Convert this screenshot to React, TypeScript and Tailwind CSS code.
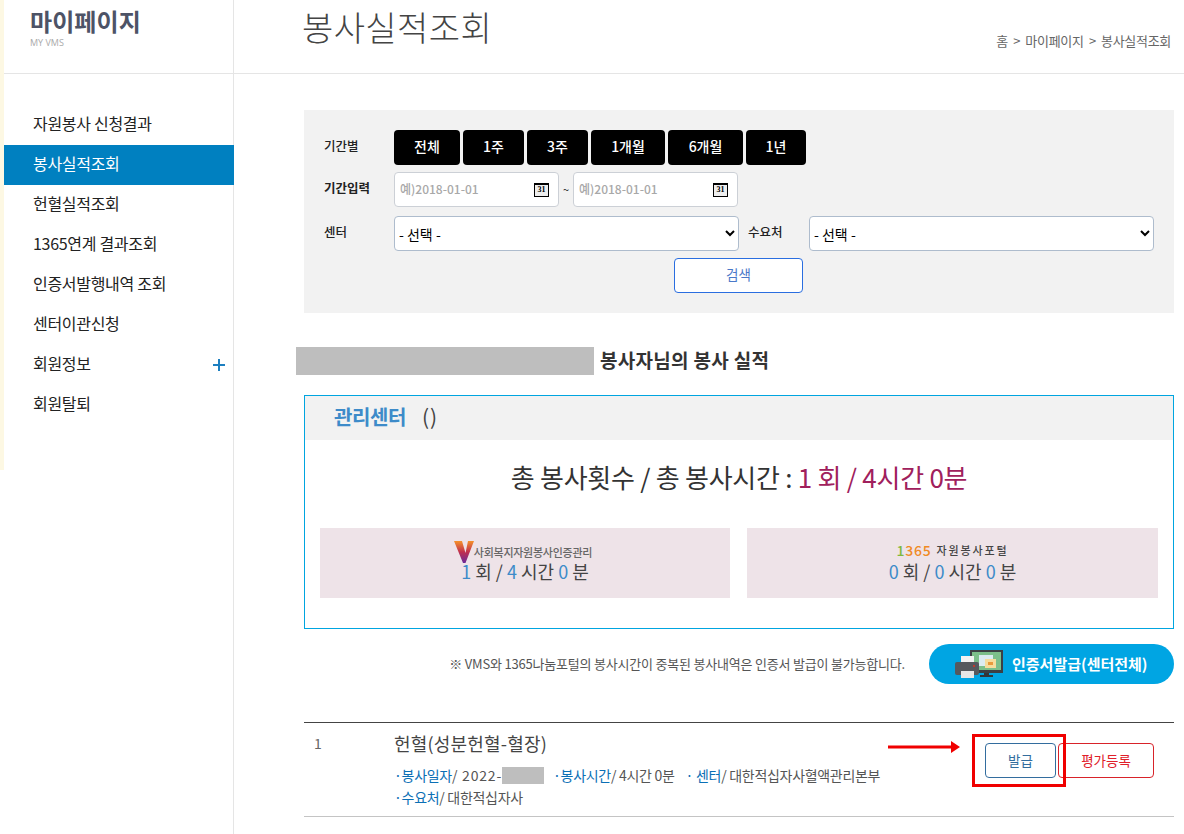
const FONT = { fontFamily: '"Noto Sans CJK KR", "Noto Sans", sans-serif' };

const menus = ["자원봉사 신청결과", "봉사실적조회", "헌혈실적조회", "1365연계 결과조회", "인증서발행내역 조회", "센터이관신청", "회원정보", "회원탈퇴"];
const periods = [
  { label: "전체", w: "w-[66px]" },
  { label: "1주", w: "w-[61px]" },
  { label: "3주", w: "w-[61px]" },
  { label: "1개월", w: "w-[74px]" },
  { label: "6개월", w: "w-[75px]" },
  { label: "1년", w: "w-[60px]" },
];

function DateInput() {
  return (
    <div className="w-[165px] h-[35px] bg-white border border-[#ccd0d6] rounded-[4px] flex items-center justify-between pl-[5px] pr-[9px]">
      <span className="text-[12px] font-medium text-[#a8a8a8] pb-[1px]">예)2018-01-01</span>
      <span className="w-[15px] h-[14px] border border-black border-t-[2px] bg-[#eee] flex items-center justify-center text-[8px] font-bold leading-none text-black" style={{ fontFamily: '"Liberation Serif", serif' }}>31</span>
    </div>
  );
}

function Printer() {
  return (
    <svg width="48" height="28" viewBox="0 0 48 28">
      <rect x="15" y="0" width="33" height="23" fill="#3c3f44" />
      <rect x="17" y="2" width="29" height="18" fill="#7cbf8a" />
      <rect x="24" y="5" width="14" height="11" fill="#dcecf2" />
      <rect x="30" y="9" width="11" height="9" fill="#f6dc9c" />
      <rect x="33" y="12" width="5" height="3" fill="#e89a3c" />
      <rect x="29" y="23" width="5" height="2" fill="#33363a" />
      <rect x="25" y="25" width="13" height="2" fill="#33363a" />
      <rect x="6" y="6" width="13" height="7" fill="#f2f2f2" />
      <rect x="0" y="12" width="24" height="13" rx="2" fill="#55585d" />
      <rect x="6" y="21" width="13" height="7" fill="#e6e6e6" />
      <rect x="18" y="15" width="2" height="2" fill="#c0392b" />
    </svg>
  );
}

export default function App() {
  return (
    <div className="w-[1184px] h-[834px] overflow-hidden bg-white flex text-[#333]" style={FONT}>
      <div className="w-[4px] h-[470px] bg-[#fdf8e3] shrink-0" />

      <aside className="w-[230px] h-full border-r border-[#e5e5e5] shrink-0">
        <div className="h-[74px] border-b border-[#e5e5e5] pl-[26px] pt-[5px]">
          <p className="text-[24px] font-bold leading-[32px] tracking-[0.1px] text-[#4d5366]">마이페이지</p>
          <p className="text-[9px] font-medium leading-[10px] pt-[1px] text-[#aaa]" style={{ fontFamily: '"Open Sans", sans-serif' }}>MY VMS</p>
        </div>
        <ul className="pt-[31px] w-[230px]">
          {menus.map((m) => (
            <li
              key={m}
              className={`h-[40px] pl-[29px] pr-[3px] pb-[4px] flex items-center justify-between text-[16px] tracking-[-0.3px] ${m === "봉사실적조회" ? "bg-[#0080c0] text-white" : "text-[#222]"}`}
            >
              {m}
              {m === "회원정보" && (
                <svg width="12" height="12" viewBox="0 0 12 12" className="mr-[6px] mt-[4px]">
                  <path d="M5 0h2v5h5v2H7v5H5V7H0V5h5z" fill="#1d7fc0" />
                </svg>
              )}
            </li>
          ))}
        </ul>
      </aside>

      <main className="flex-1 min-w-0">
        <header className="h-[74px] border-b border-[#e5e5e5] flex justify-between pl-[68px] pr-[13px]">
          <h1 className="text-[34px] font-light leading-[54px] tracking-[0.4px] text-[#444]">봉사실적조회</h1>
          <p className="text-[13px] tracking-[-0.3px] text-[#666] pt-[31px]">홈 &nbsp;&gt;&nbsp; 마이페이지 &nbsp;&gt;&nbsp; 봉사실적조회</p>
        </header>

        <div className="pl-[70px] pr-[10px] pt-[36px]">
          <section className="h-[203px] bg-[#f2f2f2] pt-[20px] pl-[20px] pr-[20px] text-[#222]">
            <div className="flex items-center h-[35px]">
              <span className="w-[70px] text-[12.5px] font-medium pb-[2px]">기간별</span>
              <div className="flex gap-[3px]">
                {periods.map((p) => (
                  <button key={p.label} className={`${p.w} h-[35px] pb-[3px] bg-black rounded-[4px] text-white text-[14px] font-medium`}>{p.label}</button>
                ))}
              </div>
            </div>
            <div className="flex items-center h-[35px] mt-[7px]">
              <span className="w-[70px] text-[12.5px] font-bold pb-[2px]">기간입력</span>
              <DateInput />
              <span className="w-[14px] text-center text-[11px]">~</span>
              <DateInput />
            </div>
            <div className="flex items-center h-[35px] mt-[9px]">
              <span className="w-[70px] text-[12.5px] font-medium pb-[2px]">센터</span>
              <select className="w-[345px] h-[35px] bg-white border border-[#aebccd] rounded-[4px] text-[14px] text-black">
                <option>- 선택 -</option>
              </select>
              <span className="w-[70px] pl-[9px] pb-[2px] text-[12.5px] font-medium">수요처</span>
              <select className="w-[345px] h-[35px] bg-white border border-[#aebccd] rounded-[4px] text-[14px] text-black">
                <option>- 선택 -</option>
              </select>
            </div>
            <div className="mt-[7px] pl-[350px]">
              <button className="w-[129px] h-[35px] pb-[3px] bg-white border border-[#2a6ee0] rounded-[4px] text-[13.5px] text-[#4a78c8]">검색</button>
            </div>
          </section>

          <div className="flex items-center h-[28px] mt-[34px] -ml-[8px]">
            <div className="w-[298px] h-[28px] bg-[#bebebe]" />
            <h2 className="ml-[6px] pb-[2px] text-[19px] font-bold tracking-[0.3px] text-[#333]">봉사자님의 봉사 실적</h2>
          </div>

          <section className="h-[234px] mt-[20px] border border-[#00a5e0]">
            <div className="h-[44px] bg-[#f2f2f2] pl-[29px] pb-[3px] flex items-center gap-[16px]">
              <span className="text-[20px] font-bold tracking-[-0.4px] text-[#3d8bc9]">관리센터</span>
              <span className="text-[21px] tracking-[1px] text-[#444]">()</span>
            </div>
            <p className="mt-[18px] h-[38px] text-center text-[26px] leading-[38px] tracking-[-0.25px] text-[#333]">
              총 봉사횟수 / 총 봉사시간 : <span className="text-[#a0205c]">1 회 / 4시간 0분</span>
            </p>
            <div className="mt-[32px] flex gap-[17px] pl-[15px] pr-[15px]">
              <div className="w-[410px] h-[70px] bg-[#eee3e8] flex flex-col items-center pt-[14px]">
                <div className="flex items-end h-[18px] -ml-[4px]">
                  <svg width="20" height="22" viewBox="0 0 20 22" className="mb-[-3px]">
                    <defs>
                      <linearGradient id="vlogo" x1="0" y1="0" x2="0" y2="1">
                        <stop offset="0" stopColor="#f5922a" />
                        <stop offset="0.5" stopColor="#c0304f" />
                        <stop offset="1" stopColor="#6a2a9a" />
                      </linearGradient>
                    </defs>
                    <path d="M0 0h8l3.5 12L14 0h6l-8.5 22h-2.5z" fill="url(#vlogo)" />
                  </svg>
                  <span className="text-[11px] leading-[16px] tracking-[-0.25px] text-[#666] font-medium">사회복지자원봉사인증관리</span>
                </div>
                <p className="text-[18px] leading-[20px] mt-[1px] text-[#444]">
                  <span className="text-[#3d8bc9]">1</span> 회 / <span className="text-[#3d8bc9]">4</span> 시간 <span className="text-[#3d8bc9]">0</span> 분
                </p>
              </div>
              <div className="w-[411px] h-[70px] bg-[#eee3e8] flex flex-col items-center pt-[13px]">
                <div className="flex items-center h-[18px] gap-[5px]">
                  <span className="text-[14px] font-medium leading-none tracking-[0.8px]">
                    <span className="text-[#7fb83d]">1</span>
                    <span className="text-[#f08a24]">365</span>
                  </span>
                  <span className="text-[11px] font-medium tracking-[1.9px] text-[#444]">자원봉사포털</span>
                </div>
                <p className="text-[18px] leading-[20px] mt-[2px] text-[#444]">
                  <span className="text-[#3d8bc9]">0</span> 회 / <span className="text-[#3d8bc9]">0</span> 시간 <span className="text-[#3d8bc9]">0</span> 분
                </p>
              </div>
            </div>
          </section>

          <div className="flex items-center justify-end mt-[15px] h-[40px]">
            <p className="text-[13px] tracking-[-0.2px] text-[#555] mr-[24px]">※ VMS와 1365나눔포털의 봉사시간이 중복된 봉사내역은 인증서 발급이 불가능합니다.</p>
            <button className="w-[245px] h-[40px] rounded-full bg-[#00a5e3] flex items-center pl-[26px] gap-[9px] text-white text-[15px] font-bold">
              <Printer />
              인증서발급(센터전체)
            </button>
          </div>

          <section className="relative h-[95px] mt-[38px] border-t border-[#444] border-b-[#c4c4c4] border-b pl-[10px] flex">
            <span className="w-[80px] pt-[10px] text-[14px] text-[#666]">1</span>
            <div className="flex-1">
              <p className="pt-[7px] text-[18px] leading-[26px] tracking-[0.2px] text-[#444]">헌혈(성분헌혈-혈장)</p>
              <div className="mt-[8px] text-[14px] leading-[22px] tracking-[-0.3px] text-[#555]">
                <p className="flex items-center">
                  <span className="text-[#0b6fb5]">·봉사일자</span>
                  <span className="tracking-[0.8px]">/ 2022-</span>
                  <span className="inline-block w-[42px] h-[17px] bg-[#bebebe] mr-[9px]" />
                  <span className="text-[#0b6fb5]">·봉사시간</span>/ 4시간 0분
                  <span className="text-[#0b6fb5] ml-[11px]"><span className="mr-[3px]">·</span>센터</span>/ 대한적십자사혈액관리본부
                </p>
                <p><span className="text-[#0b6fb5]">·수요처</span>/ 대한적십자사</p>
              </div>
            </div>
            <div className="flex gap-[2px] pt-[20px] pr-[20px]">
              <button className="w-[71px] h-[35px] bg-white border border-[#336d9e] rounded-[4px] text-[13.5px] text-[#336d9e]">발급</button>
              <button className="w-[96px] h-[35px] bg-white border border-[#d8232a] rounded-[4px] text-[13.5px] text-[#e0202a]">평가등록</button>
            </div>
            {/* 빨간 표시 */}
            <div className="absolute left-[668px] top-[11px] w-[94px] h-[53px] border-[3px] border-[#f00000]" />
            <svg className="absolute left-[584px] top-[17px]" width="72" height="14" viewBox="0 0 72 14">
              <path d="M0 5.5h63V1l9 6-9 6V8.5H0z" fill="#f00000" />
            </svg>
          </section>
        </div>
      </main>
    </div>
  );
}
